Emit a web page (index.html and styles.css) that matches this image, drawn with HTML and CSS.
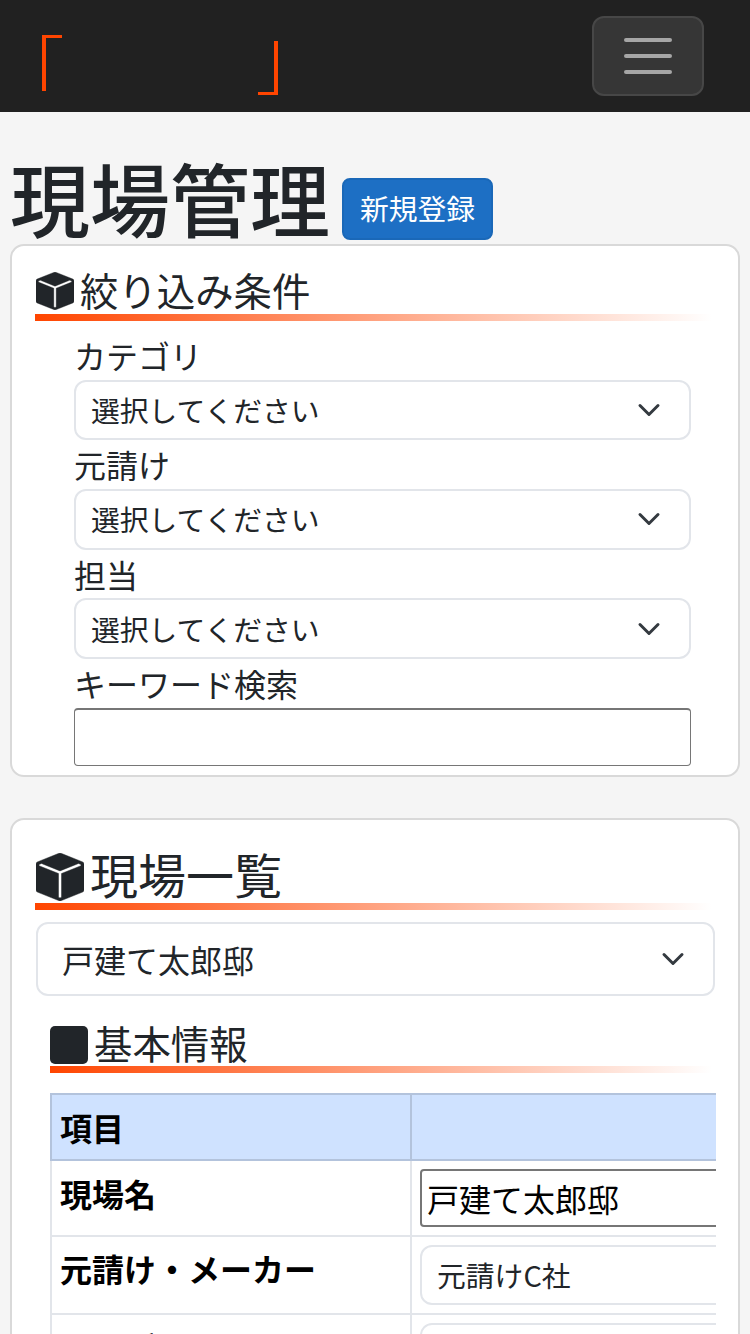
FILE: index.html
```html
<!DOCTYPE html>
<html lang="ja">
<head>
<meta charset="utf-8">
<title>現場管理</title>
<link rel="stylesheet" href="styles.css">
</head>
<body>
<header class="navbar">
  <a class="brand" href="#"><span class="br-open"></span><span class="br-close"></span></a>
  <button class="toggler" type="button" aria-label="menu"><span></span><span></span><span></span></button>
</header>
<main class="main">
  <div class="title-row">
    <h1 class="page-title">現場管理</h1>
    <a class="btn-new" href="#">新規登録</a>
  </div>
  <section class="card card-filter">
    <h2 class="heading heading-sm">
      <svg class="cube cube-sm" viewBox="0 0 16 16"><path fill="#212529" stroke="#212529" stroke-width=".15" fill-rule="evenodd" d="M15.528 2.973a.75.75 0 0 1 .472.696v8.662a.75.75 0 0 1-.472.696l-7.25 2.9a.75.75 0 0 1-.557 0l-7.25-2.9A.75.75 0 0 1 0 12.331V3.669a.75.75 0 0 1 .471-.696L7.443.184l.004-.001.274-.11a.75.75 0 0 1 .558 0l.274.11.004.001 6.971 2.789Zm-1.374.527L8 5.962 1.846 3.5 1 3.839v.4l6.5 2.6v7.922l.5.2.5-.2V6.84l6.5-2.6v-.4l-.846-.339Z"/></svg>絞り込み条件
    </h2>
    <div class="filter-body">
      <label class="field-label">カテゴリ</label>
      <div class="select">選択してください<svg class="chev" viewBox="0 0 16 16"><path d="M2 5l6 6 6-6"/></svg></div>
      <label class="field-label">元請け</label>
      <div class="select">選択してください<svg class="chev" viewBox="0 0 16 16"><path d="M2 5l6 6 6-6"/></svg></div>
      <label class="field-label">担当</label>
      <div class="select">選択してください<svg class="chev" viewBox="0 0 16 16"><path d="M2 5l6 6 6-6"/></svg></div>
      <label class="field-label">キーワード検索</label>
      <input class="keyword" type="text">
    </div>
  </section>
  <section class="card card-list">
    <h2 class="heading heading-lg">
      <svg class="cube cube-lg" viewBox="0 0 16 16"><path fill="#212529" stroke="#212529" stroke-width=".15" fill-rule="evenodd" d="M15.528 2.973a.75.75 0 0 1 .472.696v8.662a.75.75 0 0 1-.472.696l-7.25 2.9a.75.75 0 0 1-.557 0l-7.25-2.9A.75.75 0 0 1 0 12.331V3.669a.75.75 0 0 1 .471-.696L7.443.184l.004-.001.274-.11a.75.75 0 0 1 .558 0l.274.11.004.001 6.971 2.789Zm-1.374.527L8 5.962 1.846 3.5 1 3.839v.4l6.5 2.6v7.922l.5.2.5-.2V6.84l6.5-2.6v-.4l-.846-.339Z"/></svg>現場一覧
    </h2>
    <div class="select select-lg">戸建て太郎邸<svg class="chev" viewBox="0 0 16 16"><path d="M2 5l6 6 6-6"/></svg></div>
    <div class="sub">
      <h3 class="heading heading-sub"><span class="square"></span>基本情報</h3>
      <div class="table-wrap">
        <table class="info">
          <thead>
            <tr><th class="col-a">項目</th><th class="col-b"></th></tr>
          </thead>
          <tbody>
            <tr class="r-name"><th>現場名</th><td><div class="text-input">戸建て太郎邸</div></td></tr>
            <tr class="r-maker"><th>元請け・メーカー</th><td><div class="select select-cell">元請けC社</div></td></tr>
            <tr class="r-cat"><th>カテゴリ</th><td><div class="select select-cell"></div></td></tr>
          </tbody>
        </table>
      </div>
    </div>
  </section>
</main>
</body>
</html>
```
FILE: styles.css
```css
* { box-sizing: border-box; }
html, body { margin: 0; height: 1334px; overflow: hidden; }
body {
  background: #f5f5f5;
  color: #212529;
  font-family: "Noto Sans CJK JP", "Noto Sans", sans-serif;
  font-size: 32px;
  line-height: 1.5;
}
.navbar {
  height: 112px;
  background: #212121;
  display: flex;
  justify-content: space-between;
  align-items: flex-start;
  padding: 16px 46px 0 42px;
}
.brand { display: flex; align-items: flex-start; width: 236px; height: 60px; margin-top: 19px; justify-content: space-between; }
.br-open { width: 20px; height: 56px; border-left: 4px solid #ff4500; border-top: 3px solid #ff4500; }
.br-close { width: 20px; height: 54px; margin-top: 6px; border-right: 4px solid #ff4500; border-bottom: 3px solid #ff4500; }
.toggler {
  width: 112px;
  height: 80px;
  padding: 0;
  background: #363636;
  border: 2px solid #474747;
  border-radius: 12px;
  display: flex;
  flex-direction: column;
  align-items: center;
  justify-content: center;
  gap: 12px;
}
.toggler span { width: 48px; height: 4px; border-radius: 2px; background: #a6a6a6; }
.main { padding: 0 10px; }
.title-row { display: flex; align-items: flex-end; gap: 12px; padding: 40px 0 4px 0; height: 132px; }
.page-title { margin: 0; font-size: 80px; font-weight: 500; line-height: 88px; height: 88px; }
.btn-new {
  display: block;
  width: 151px;
  height: 62px;
  background: #1d6fc4;
  border: 2px solid #1a68b8;
  border-radius: 8px;
  color: #fff;
  font-size: 28.8px;
  line-height: 56px;
  text-align: center;
  text-decoration: none;
}
.card {
  background: #fff;
  border: 2px solid #d9d9d9;
  border-radius: 14px;
}
.card-filter { height: 533px; padding: 22px 30px 0 23px; margin-bottom: 41px; }
.card-list { height: 560px; padding: 26px 24px 0 24px; }
.heading {
  margin: 0;
  font-weight: 400;
  display: flex;
  align-items: center;
  background: linear-gradient(to right, #ff4500, #fff) no-repeat left bottom / 100% 7px;
}
.heading-sm { font-size: 38.4px; line-height: 48px; height: 53px; padding-bottom: 12px; width: 677px; }
.heading-lg { font-size: 48px; line-height: 58px; height: 64px; padding-bottom: 11px; width: 677px; margin: 0 0 12px -1px; }
.heading-sub { font-size: 38.4px; line-height: 46px; height: 50px; width: 662px; padding-bottom: 12px; }
.cube { display: block; flex: none; }
.cube-sm { width: 38px; height: 38px; margin: 4px 6px 0 1px; }
.cube-lg { width: 48px; height: 48px; margin: 9px 6px 0 1px; }
.square { display: block; width: 38px; height: 38px; background: #212529; border-radius: 5px; margin: 6px 6px 0 0; }
.filter-body { padding: 0 0 0 39px; width: 656px; margin-top: 10.17px; }
.field-label { display: block; height: 48.66px; line-height: 48px; }
.select {
  height: 60.67px;
  border: 2px solid #e2e5ea;
  border-radius: 12px;
  background: #fff;
  font-size: 28.8px;
  line-height: 56px;
  padding-left: 15px;
  display: flex;
  align-items: center;
  justify-content: space-between;
}
.chev { width: 24px; height: 24px; margin-right: 28px; fill: none; stroke: #343a40; stroke-width: 2; stroke-linecap: round; stroke-linejoin: round; flex: none; }
.keyword {
  display: block;
  width: 100%;
  height: 58px;
  border: solid #767676;
  border-width: 2px 1.5px 1.5px;
  border-radius: 4px;
  background: #fff;
}
.select-lg { height: 74px; font-size: 32px; padding-left: 24px; width: 679px; }
.sub { padding: 27px 0 0 14px; }
.table-wrap { width: 666px; overflow: hidden; margin-top: 20px; }
.info { border-collapse: collapse; width: 1000px; table-layout: fixed; }
.info th, .info td { border: 2px solid #e2e5ea; padding: 8px; vertical-align: top; text-align: left; }
.info th { font-weight: 700; color: #000; padding-left: 8px; padding-top: 8px; }
.col-a { width: 360px; }
.info thead th { background: #cfe2ff; border-color: #b3c3dc; height: 66px; vertical-align: middle; padding-top: 0; padding-bottom: 0; }
.r-name th, .r-name td { height: 75px; }
.r-maker th, .r-maker td { height: 78px; }
.info .r-maker th { padding-top: 7px; }
.text-input {
  height: 58px;
  border: 2px solid #767676;
  border-radius: 4px;
  line-height: 54px;
  padding-left: 5px;
  font-size: 32px;
  color: #000;
}
.select-cell { height: 60px; margin: 0; }
```
